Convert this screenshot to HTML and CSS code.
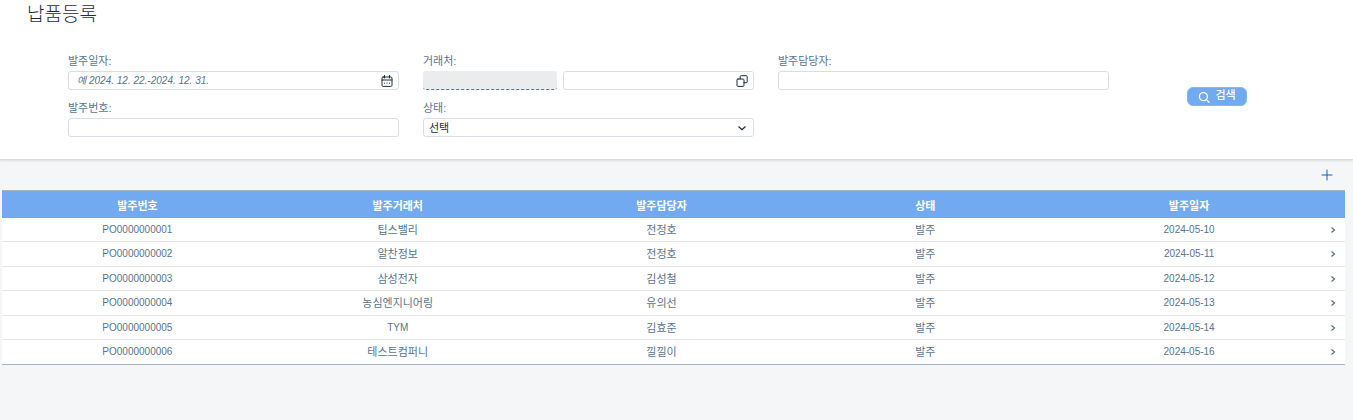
FILE: index.html
```html
<!DOCTYPE html>
<html lang="ko">
<head>
<meta charset="utf-8">
<title>납품등록</title>
<link rel="stylesheet" href="styles.css">
</head>
<body>
<header class="page-header">
  <h1 class="page-title">납품등록</h1>
  <form class="filter">
    <div class="fields">
      <div class="field">
        <label for="order-date">발주일자:</label>
        <div class="control">
          <input class="input input-date" id="order-date" type="text" placeholder="예 2024. 12. 22.-2024. 12. 31.">
          <button class="icon-button" type="button" aria-label="날짜 선택">
            <svg class="icon" viewBox="0 0 12 12"><rect x="1" y="2" width="10" height="9.4" rx="1.2"/><path d="M1 5h10M3.5 .5v2.5M8.5 .5v2.5"/><path class="dots" d="M3 8.2h1M5.5 8.2h1M8 8.2h1"/></svg>
          </button>
        </div>
      </div>
      <div class="field">
        <label for="vendor">거래처:</label>
        <div class="pair">
          <input class="input input-readonly" type="text" aria-label="거래처명" readonly>
          <div class="control">
            <input class="input" id="vendor" type="text">
            <button class="icon-button" type="button" aria-label="거래처 찾기">
              <svg class="icon" viewBox="0 0 12 12"><rect x="1" y="4" width="7" height="7.4" rx="1"/><path d="M4.2 4V1.6q0-.9.9-.9h5.2q.9 0 .9.9v5.2q0 .9-.9.9H8"/></svg>
            </button>
          </div>
        </div>
      </div>
      <div class="field">
        <label for="manager">발주담당자:</label>
        <input class="input" id="manager" type="text">
      </div>
      <div class="field">
        <label for="order-no">발주번호:</label>
        <input class="input" id="order-no" type="text">
      </div>
      <div class="field">
        <label for="status">상태:</label>
        <div class="control">
          <select class="input input-select" id="status"><option>선택</option></select>
          <svg class="icon select-arrow" viewBox="0 0 12 12"><path d="M2.8 4.8 6 7.8l3.2-3"/></svg>
        </div>
      </div>
    </div>
    <div class="actions">
      <button class="search" type="submit">
        <svg class="icon" viewBox="0 0 12 12"><circle cx="5.4" cy="5.6" r="4"/><path d="m8.4 8.6 2.6 2.6"/></svg>
        <span>검색</span>
      </button>
    </div>
  </form>
</header>
<main class="content">
  <div class="toolbar">
    <button class="add" type="button" aria-label="추가">
      <svg class="icon" viewBox="0 0 12 12"><path d="M6 1v10M1 6h10"/></svg>
    </button>
  </div>
  <table class="orders">
    <colgroup><col><col><col><col><col><col class="nav-col"></colgroup>
    <thead>
      <tr><th>발주번호</th><th>발주거래처</th><th>발주담당자</th><th>상태</th><th>발주일자</th><th></th></tr>
    </thead>
    <tbody>
      <tr><td class="latin">PO0000000001</td><td>팁스밸리</td><td>전정호</td><td>발주</td><td class="latin">2024-05-10</td><td class="nav"><svg class="chevron" viewBox="0 0 8 8"><path d="m2.5 1.5 3 2.5-3 2.5"/></svg></td></tr>
      <tr><td class="latin">PO0000000002</td><td>알찬정보</td><td>전정호</td><td>발주</td><td class="latin">2024-05-11</td><td class="nav"><svg class="chevron" viewBox="0 0 8 8"><path d="m2.5 1.5 3 2.5-3 2.5"/></svg></td></tr>
      <tr><td class="latin">PO0000000003</td><td>삼성전자</td><td>김성철</td><td>발주</td><td class="latin">2024-05-12</td><td class="nav"><svg class="chevron" viewBox="0 0 8 8"><path d="m2.5 1.5 3 2.5-3 2.5"/></svg></td></tr>
      <tr><td class="latin">PO0000000004</td><td>농심엔지니어링</td><td>유의선</td><td>발주</td><td class="latin">2024-05-13</td><td class="nav"><svg class="chevron" viewBox="0 0 8 8"><path d="m2.5 1.5 3 2.5-3 2.5"/></svg></td></tr>
      <tr><td class="latin">PO0000000005</td><td class="latin">TYM</td><td>김효준</td><td>발주</td><td class="latin">2024-05-14</td><td class="nav"><svg class="chevron" viewBox="0 0 8 8"><path d="m2.5 1.5 3 2.5-3 2.5"/></svg></td></tr>
      <tr><td class="latin">PO0000000006</td><td>테스트컴퍼니</td><td>낄낄이</td><td>발주</td><td class="latin">2024-05-16</td><td class="nav"><svg class="chevron" viewBox="0 0 8 8"><path d="m2.5 1.5 3 2.5-3 2.5"/></svg></td></tr>
    </tbody>
  </table>
</main>
</body>
</html>
```
FILE: styles.css
```css
* { box-sizing: border-box; }

body {
  margin: 0;
  background: #f5f6f8;
  color: #5b738b;
  font: 11px/16px "Liberation Sans", "Noto Sans CJK KR", sans-serif;
}

button, input, select { font: inherit; color: inherit; margin: 0; }

button { cursor: pointer; }

.icon {
  display: block;
  width: 12px;
  height: 12px;
  fill: none;
  stroke: currentColor;
  stroke-width: 1;
  stroke-linecap: round;
}

.page-header {
  background: #fff;
  padding-bottom: 22px;
  border-bottom: 1px solid #d9dbde;
  box-shadow: 0 1px 2px #0000001a;
}

.page-title {
  margin: 0;
  padding: 4px 27px 0;
  color: #1d2d3e;
  font-size: 19px;
  font-weight: 300;
  line-height: 22px;
}

.filter {
  display: flex;
  padding: 27px 28px 0 68px;
}

.fields {
  flex: 1;
  display: grid;
  grid-template-columns: repeat(3, 1fr);
  gap: 10px 24px;
}

.field {
  display: flex;
  flex-direction: column;
  gap: 2px;
}

.control { position: relative; }

.pair {
  display: grid;
  grid-template-columns: 12fr 17fr;
  gap: 6px;
}

.input {
  display: block;
  width: 100%;
  height: 19px;
  padding: 0 5px;
  border: 1px solid #d9dee4;
  border-radius: 3px;
  background: #fff;
  color: #1d2d3e;
  outline: none;
}

.input-date { padding: 0 8px; font-size: 10px; }

.input-date::placeholder { color: #5b738b; font-style: italic; opacity: 1; }

.input-readonly {
  border: 0;
  border-bottom: 1px dashed #5b738b;
  background: #eaecee;
}

.input-select { appearance: none; }

.icon-button {
  position: absolute;
  top: 4px;
  right: 6px;
  padding: 0;
  border: 0;
  background: none;
  color: #1d2d3e;
}

.dots { stroke-linecap: butt; }

.select-arrow {
  position: absolute;
  top: 4px;
  right: 6px;
  color: #1d2d3e;
  stroke-width: 1.2;
  pointer-events: none;
}

.actions {
  width: 216px;
  display: flex;
  align-items: center;
  justify-content: center;
  padding-top: 3px;
}

.search {
  display: flex;
  align-items: center;
  gap: 5px;
  height: 19px;
  padding: 0 10px;
  border: 1px solid #84b7f3;
  border-radius: 6px;
  background: #71aaf0;
  color: #fff;
  font-weight: 500;
}

.search .icon { stroke-width: 1.3; }

.search span { padding-bottom: 3px; }

.content { padding: 0 8px 0 2px; }

.toolbar {
  display: flex;
  align-items: center;
  justify-content: flex-end;
  height: 30px;
  padding-right: 12px;
}

.add { padding: 0; border: 0; background: none; color: #0064d9; }

.orders {
  width: 100%;
  table-layout: fixed;
  border-collapse: separate;
  border-spacing: 0;
  text-align: center;
  border-top: 1px solid #a8b3c0;
}

.nav-col { width: 24px; }

.orders th {
  height: 27px;
  padding: 3px 0 0;
  background: #71aaf0;
  color: #fff;
  font-weight: 700;
}

.orders td {
  height: 24px;
  padding: 0;
  border-bottom: 1px solid #e5e5e5;
  background: #fff;
}

.orders tr:nth-child(even) td { height: 25px; }

.orders th:first-child, .orders td:first-child { padding-left: 7px; }

.orders .latin { font-size: 10px; }

.orders tbody tr:last-child td { border-bottom-color: #a8b3c0; }

.chevron {
  display: block;
  width: 8px;
  height: 8px;
  margin: 0 auto;
  fill: none;
  stroke: currentColor;
  stroke-width: 1.3;
}
```
